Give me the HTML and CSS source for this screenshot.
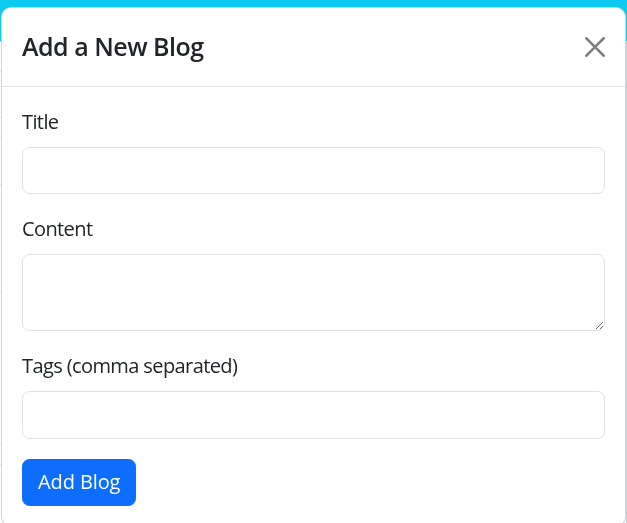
FILE: index.html
```html
<!DOCTYPE html>
<html lang="en">
<head>
<meta charset="utf-8">
<title>Add a New Blog</title>
<link rel="stylesheet" href="styles.css">
</head>
<body>
<div class="page">
  <div class="topbar"></div>
  <div class="rows">
    <div class="row r1"></div>
    <div class="row r2"></div>
    <div class="row r3"></div>
    <div class="row r4"></div>
    <div class="row r5"></div>
    <div class="row r6"></div>
    <div class="row r7"></div>
  </div>
</div>

<div class="modal">
  <div class="modal-content">
    <div class="modal-header">
      <h5 class="modal-title">Add a New Blog</h5>
      <button class="btn-close" type="button" aria-label="Close">
        <svg viewBox="0 0 16 16" width="20" height="20"><path d="M.293.293a1 1 0 0 1 1.414 0L8 6.586 14.293.293a1 1 0 1 1 1.414 1.414L9.414 8l6.293 6.293a1 1 0 0 1-1.414 1.414L8 9.414l-6.293 6.293a1 1 0 0 1-1.414-1.414L6.586 8 .293 1.707a1 1 0 0 1 0-1.414z"/></svg>
      </button>
    </div>
    <div class="modal-body">
      <div class="group">
        <label class="label" for="title">Title</label>
        <input class="control" id="title" type="text">
      </div>
      <div class="group">
        <label class="label" for="content">Content</label>
        <textarea class="control area" id="content"></textarea>
      </div>
      <div class="group">
        <label class="label" for="tags">Tags (comma separated)</label>
        <input class="control" id="tags" type="text">
      </div>
      <button class="btn-primary" type="button">Add Blog</button>
    </div>
  </div>
</div>
</body>
</html>
```
FILE: styles.css
```css
* { box-sizing: border-box; }
html, body { margin: 0; padding: 0; }
body {
  font-family: "Open Sans", "Noto Sans", sans-serif;
  color: #212529;
  background: #fff;
  width: 627px;
  height: 523px;
  overflow: hidden;
}
.page { position: relative; height: 523px; }
.topbar { height: 41px; background: #0dcaf0; }
.rows { border-right: 1px solid #cfd3d7; height: 482px; }
.row { border-bottom: 1px solid #dee2e6; }
.r1 { height: 31px; }
.r2 { height: 46px; }
.r3 { height: 20px; }
.r4 { height: 47px; }
.r5 { height: 108px; }
.r6 { height: 152px; }
.r7 { height: 20px; }

.modal {
  position: fixed;
  top: 7px;
  left: 1px;
  width: 625px;
}
.modal-content {
  background: #fff;
  border: 1px solid rgba(0,0,0,.175);
  border-radius: 10px;
}
.modal-header {
  display: flex;
  align-items: center;
  padding: 20px;
  border-bottom: 1px solid #dee2e6;
}
.modal-title {
  margin: 0;
  font-size: 25px;
  line-height: 37.5px;
  font-weight: 600;
  letter-spacing: -0.5px;
}
.btn-close {
  margin: -10px -5px -10px auto;
  padding: 5px;
  width: 30px;
  height: 30px;
  border: 0;
  background: transparent;
  opacity: .5;
  display: flex;
}
.btn-close svg { fill: #000; display: block; }
.modal-body { padding: 20px; }
.group { margin-bottom: 20px; }
.label {
  display: block;
  font-size: 20px;
  line-height: 30px;
  margin-bottom: 10px;
  letter-spacing: -0.6px;
}
.control {
  display: block;
  width: 100%;
  height: 47.5px;
  padding: 7.5px 15px;
  font: inherit;
  font-size: 20px;
  line-height: 30px;
  color: #212529;
  border: 1px solid #dee2e6;
  border-radius: 7.5px;
  background: #fff;
}
.area { height: 77px; resize: vertical; }
.btn-primary {
  font: inherit;
  font-size: 20px;
  line-height: 30px;
  padding: 7.5px 15px;
  letter-spacing: -0.1px;
  color: #fff;
  background: #0d6efd;
  border: 1px solid #0d6efd;
  border-radius: 7.5px;
}
```
